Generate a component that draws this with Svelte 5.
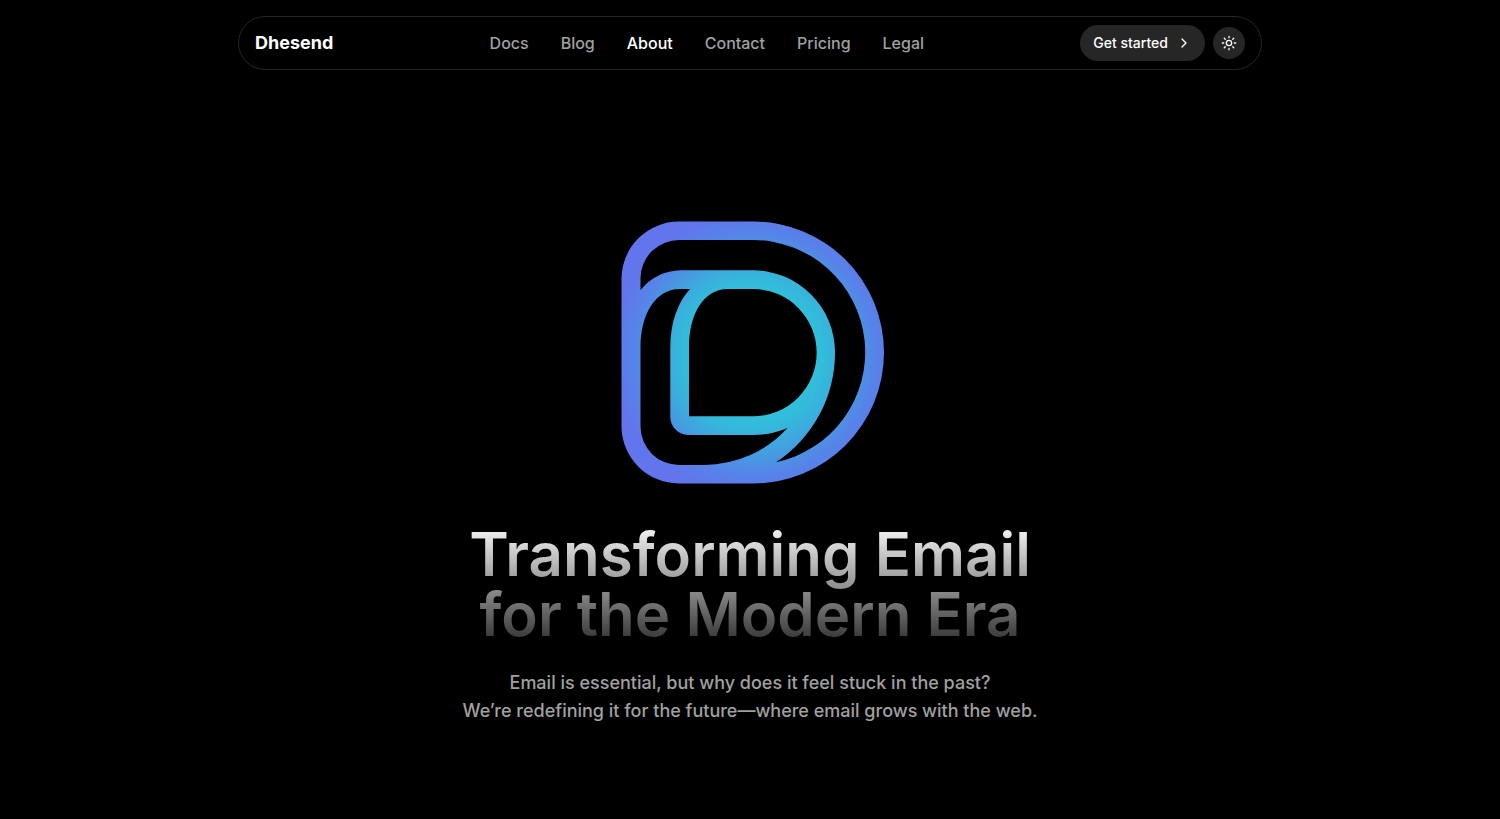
<script>
  const links = ['Docs', 'Blog', 'About', 'Contact', 'Pricing', 'Legal'];
  const current = 'About';
</script>

<header>
  <div class="bar">
    <a class="brand" href="#home">Dhesend</a>
    <nav aria-label="Main">
      {#each links as link}
        <a
          href={'#' + link.toLowerCase()}
          class:active={link === current}
          aria-current={link === current ? 'page' : undefined}>{link}</a>
      {/each}
    </nav>
    <div class="actions">
      <a class="start" href="#start">
        Get started
        <svg width="16" height="16" viewBox="0 0 24 24" aria-hidden="true">
          <path d="m9 18 6-6-6-6" />
        </svg>
      </a>
      <button class="theme" type="button" aria-label="Toggle theme">
        <svg width="16" height="16" viewBox="0 0 24 24" aria-hidden="true">
          <circle cx="12" cy="12" r="4" />
          <path d="M12 2v2M12 20v2M4.93 4.93l1.41 1.41M17.66 17.66l1.41 1.41M2 12h2M20 12h2M6.34 17.66l-1.41 1.41M19.07 4.93l-1.41 1.41" />
        </svg>
      </button>
    </div>
  </div>
</header>

<main>
  <svg class="logo" width="300" height="300" viewBox="600 202 300 300" role="img" aria-label="Dhesend logo">
    <defs>
      <radialGradient id="glow" gradientUnits="userSpaceOnUse" cx="754" cy="354" r="142">
        <stop offset="0.44" stop-color="#30c0da" />
        <stop offset="0.58" stop-color="#38b2dc" />
        <stop offset="0.74" stop-color="#4798e1" />
        <stop offset="0.84" stop-color="#5585e8" />
        <stop offset="1" stop-color="#6275ec" />
      </radialGradient>
    </defs>
    <path
      fill="url(#glow)"
      fill-rule="evenodd"
      d="M679 221.5H753A131 131 0 0 1 753 483.5H679A57.5 57.5 0 0 1 621.5 426V279A57.5 57.5 0 0 1 679 221.5Z
         M640.5 290V278A38.5 38.5 0 0 1 679 240H753A112.3 112.3 0 0 1 776 462.2A131 131 0 0 0 835 352.5A82 82 0 0 0 753 270.3H681A54 54 0 0 0 640.5 290Z
         M680 289H690C678 302 670.3 322 670.3 348V417A18 18 0 0 0 688 435H753Q771 435 787.5 428A112.3 112.3 0 0 1 704 465H679A38.5 38.5 0 0 1 640.5 427V348C640.5 313 656 289 680 289Z
         M689 416.3V348C689 313 704 289 728 289H753A63.6 63.6 0 0 1 753 416.3Z" />
  </svg>
  <h1>Transforming Email<br />for the Modern Era</h1>
  <p>Email is essential, but why does it feel stuck in the past?<br />We’re redefining it for the future—where email grows with the web.</p>
</main>

<style>
  :global(body) {
    margin: 0;
    background: #000;
    color: #fff;
    font-family: Inter, sans-serif;
  }
  header {
    padding: 16px 16px 0;
  }
  .bar {
    box-sizing: border-box;
    max-width: 1024px;
    margin: 0 auto;
    padding: 8px 16px;
    display: flex;
    align-items: center;
    justify-content: space-between;
    border: 1px solid #262626;
    border-radius: 32px;
  }
  a {
    color: inherit;
    text-decoration: none;
  }
  .brand {
    font-size: 18px;
    line-height: 28px;
    font-weight: 700;
  }
  nav {
    display: flex;
    gap: 32px;
    font-size: 16px;
    line-height: 24px;
    font-weight: 500;
    color: #a1a1a1;
  }
  nav .active {
    color: #fff;
  }
  .actions {
    display: flex;
    align-items: center;
    gap: 8px;
  }
  .start {
    display: flex;
    align-items: center;
    gap: 8px;
    padding: 8px 13px;
    border-radius: 18px;
    background: #262626;
    font-size: 14px;
    line-height: 20px;
    font-weight: 500;
  }
  .theme {
    display: grid;
    place-items: center;
    width: 32px;
    height: 32px;
    padding: 0;
    border: 0;
    border-radius: 50%;
    background: #262626;
    color: #fff;
  }
  .actions svg {
    fill: none;
    stroke: currentColor;
    stroke-width: 2;
    stroke-linecap: round;
    stroke-linejoin: round;
  }
  main {
    display: flex;
    flex-direction: column;
    align-items: center;
    padding: 132px 16px 92px;
    text-align: center;
  }
  .logo {
    display: block;
    max-width: 100%;
  }
  h1 {
    margin: 22px 0 0;
    font-size: 60px;
    line-height: 60px;
    font-weight: 600;
    color: transparent;
    background: linear-gradient(to bottom, #fafafa, #303030);
    background-clip: text;
    -webkit-background-clip: text;
  }
  p {
    margin: 25px 0 0;
    font-size: 18px;
    line-height: 28px;
    font-weight: 500;
    color: #a1a1a1;
  }
</style>
